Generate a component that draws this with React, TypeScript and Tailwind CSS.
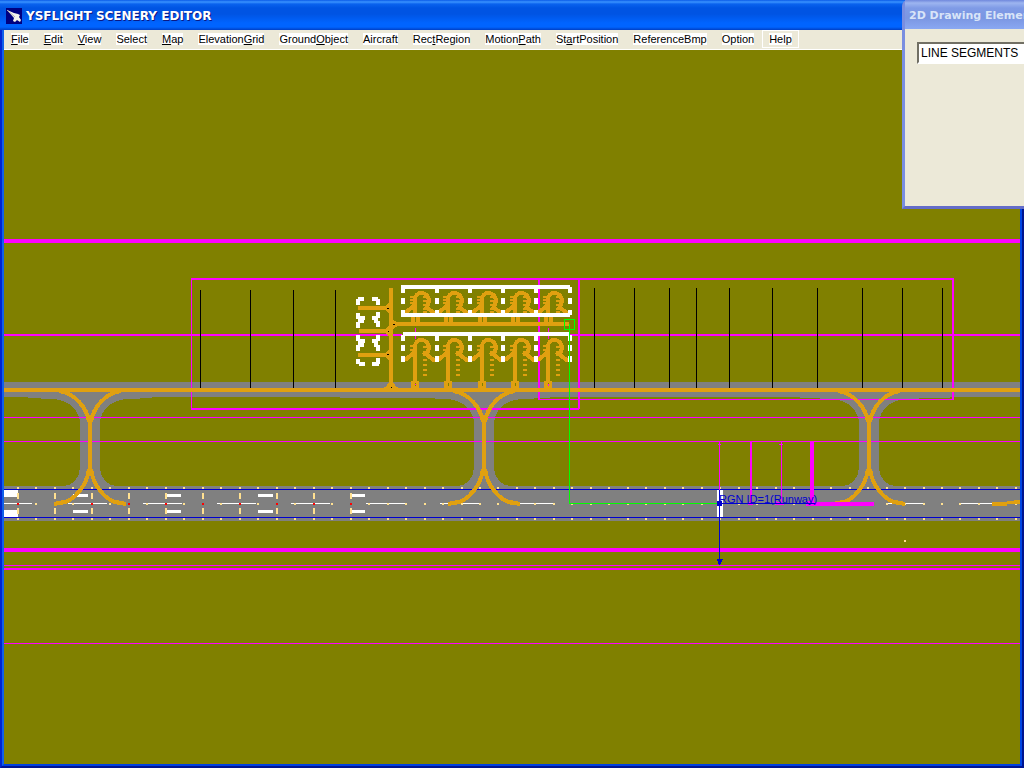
import React from 'react';

const OLIVE = '#808000';
const GRAY = '#808080';
const ORANGE = '#e0a010';
const MAGENTA = '#ff00ff';
const BLUE = '#0000d0';
const LAMP = '#ffe090';

// label split around the underlined access key
const menuItems: [string, string, string][] = [
  ['', 'F', 'ile'],
  ['', 'E', 'dit'],
  ['', 'V', 'iew'],
  ['Select', '', ''],
  ['', 'M', 'ap'],
  ['Elevation', 'G', 'rid'],
  ['Ground', 'O', 'bject'],
  ['Aircraft', '', ''],
  ['Rec', 't', 'Region'],
  ['Motion', 'P', 'ath'],
  ['St', 'a', 'rtPosition'],
  ['ReferenceBmp', '', ''],
  ['Option', '', ''],
  ['Help', '', ''],
];

const TitleBar: React.FC = () => (
  <header className="flex h-[30px] shrink-0 items-center gap-1 bg-[linear-gradient(180deg,#0a5ae8_0,#3a93ff_2px,#0a62ee_4px,#0054e3_8px,#0054e3_14px,#0064ff_23px,#0064ff_27px,#003fc4_30px)] px-1.5 pt-0.5">
    <svg width="16" height="16" viewBox="0 0 16 16" aria-hidden="true">
      <rect width="16" height="16" fill="#000080" />
      <path d="M1 2 L8 5 L12 6 L14 7 L13 9 L15 12 L14 14 L11 12 L9 14 L7 13 L8 10 Z" fill="#f4f4ee" />
      <path d="M1 2 L9 9" stroke="#b0b0b0" strokeWidth="1" />
    </svg>
    <h1 className="font-['DejaVu_Sans',sans-serif] text-[12px] leading-4 font-bold whitespace-nowrap text-white [text-shadow:1px_1px_0_#0a1883]">
      YSFLIGHT SCENERY EDITOR
    </h1>
  </header>
);

const MenuBar: React.FC = () => (
  <nav className="flex h-5 shrink-0 items-start gap-px border-b border-white bg-[#ece9d8] font-['Liberation_Sans',sans-serif] text-[11px] leading-3 text-black">
    {menuItems.map(([before, key, after]) => (
      <button
        key={before + key + after}
        type="button"
        className={`flex h-[18px] shrink-0 items-center ${before === 'Help' ? 'border border-white px-1.5' : 'px-[7px]'}`}
      >
        <span className="bg-white">
          {before}
          <span className="underline">{key}</span>
          {after}
        </span>
      </button>
    ))}
  </nav>
);

const Connector: React.FC<{ x: number }> = ({ x }) => (
  <path
    transform={`translate(${x} 0)`}
    d="M-62 396 L-62 398 L-37 399 C-20 400 -10 411 -10 424 V468 C-10 478 -18 486 -26 486 V488 H26 V486 C18 486 10 478 10 468 V424 C10 411 20 400 37 399 L62 398 V396 Z"
    fill={GRAY}
  />
);

const ConnectorLine: React.FC<{ x: number }> = ({ x }) => (
  <g transform={`translate(${x} 0)`} fill="none" stroke={ORANGE}>
    <path d="M0 415 V476" strokeWidth="4" />
    <path d="M-31 391 C-15 393 -3 408 -1 422 M31 391 C15 393 3 408 1 422" strokeWidth="4" />
    <path d="M-1 469 C-3 486 -17 502 -29 503 M1 469 C3 486 17 502 29 503" strokeWidth="4" />
    <path d="M-36 504 L-26 502 M36 504 L26 502" strokeWidth="4" />
  </g>
);

const Stand: React.FC<{ x: number }> = ({ x }) => (
  <g transform={`translate(${x} 0)`} fill="none" stroke={ORANGE}>
    {/* upper row */}
    <path d="M2 313 V300 C2 295 5 293 8 293 C13 293 16 297 16 301 L14 307" strokeWidth="4" />
    <path d="M2 305 L-8 313 M12 306 L22 314" strokeWidth="4" />
    <path d="M-3 297 H1 M-3 300 H1 M-3 303 H1 M-3 307 H1 M10 297 H14 M10 301 H14 M10 305 H14 M10 309 H14 M10 312 H14" strokeWidth="2" />
    <path d="M0 317 V322 M5 317 V322" strokeWidth="4" />
    {/* lower row */}
    <path d="M2 388 V347 C2 342 5 340 8 340 C13 340 16 344 16 348 L14 354" strokeWidth="4" />
    <path d="M2 352 L-8 360 M10 352 L22 361" strokeWidth="4" />
    <path d="M-3 346 H1 M-3 350 H1 M-2 355 H1 M10 347 H14" strokeWidth="2" />
    <path d="M12 354 V377" strokeWidth="4" strokeDasharray="2 3" />
    <path d="M0 381 V388 M4 381 V388" strokeWidth="4" />
    <path d="M2 383 V386" stroke={OLIVE} strokeWidth="1" />
  </g>
);

const rowDashes = [401, 435, 468, 501, 534, 568];
const stands = [413, 446, 480, 513, 546];
const connectors = [90, 484, 869];
const leftPoles = [200, 250, 293, 335];
const rightPoles = [594, 634, 669, 696, 729, 772, 817, 862, 902, 942];
const lamps = Array.from({ length: 55 }, (_, i) => Math.round(17 + i * 18.48));
const centreDashes = [68, 143, 217, 291, 366, 440, 514, 588, 663, 737, 886, 960];
const touchdownBars = [73, 166, 258, 350];

const SceneryMap: React.FC = () => (
  <svg
    className="block h-full w-full"
    viewBox="4 50 1016 714"
    preserveAspectRatio="xMinYMin slice"
    shapeRendering="crispEdges"
    role="img"
    aria-label="Scenery map"
  >
    <rect x="4" y="50" width="1016" height="714" fill={OLIVE} />

    {/* taxiway and runway pavement */}
    <g fill={GRAY}>
      <rect x="4" y="382" width="1016" height="15" />
      <rect x="340" y="397" width="210" height="1" />
      <rect x="800" y="397" width="150" height="1" />
      <rect x="4" y="486" width="1016" height="35" />
    </g>
    {connectors.map((x) => <Connector key={x} x={x} />)}
    <g fill={MAGENTA}>
      <rect x="4" y="417" width="1016" height="1" />
      <rect x="4" y="441" width="1016" height="1" />
    </g>

    {/* runway markings */}
    <g fill={BLUE}>
      <rect x="4" y="489" width="1016" height="1" />
      <rect x="4" y="517" width="1016" height="1" />
    </g>
    <g fill="#ffffff">
      <rect x="4" y="490" width="14" height="7" />
      <rect x="4" y="510" width="14" height="7" />
      <rect x="4" y="503" width="28" height="1" />
      {touchdownBars.map((x) => (
        <React.Fragment key={x}>
          <rect x={x} y="494" width="15" height="3" />
          <rect x={x} y="510" width="15" height="3" />
        </React.Fragment>
      ))}
      {centreDashes.map((x) => <rect key={x} x={x} y="503" width="39" height="1" />)}
      <rect x="717" y="490" width="6" height="27" />
    </g>
    {lamps.map((x, i) => (
      <g key={x} fill={LAMP}>
        <rect x={x} y="487" width="2" height="2" />
        <rect x={x} y="518" width="2" height="2" />
        <rect x={x} y="503" width="2" height="2" fill={i < 19 && i % 2 === 0 ? '#ff0000' : LAMP} />
        {i < 19 && i % 2 === 0 && (
          <>
            <rect x={x} y="493" width="2" height="6" />
            <rect x={x} y="508" width="2" height="6" />
          </>
        )}
      </g>
    ))}
    <rect x="904" y="540" width="2" height="2" fill={LAMP} />

    {/* wide region outlines */}
    <g fill={MAGENTA}>
      <rect x="4" y="239" width="1016" height="4" />
      <rect x="4" y="548" width="1016" height="4" />
      <rect x="4" y="565" width="1016" height="1" />
      <rect x="4" y="568" width="1016" height="2" />
      <rect x="4" y="643" width="1016" height="1" />
      <rect x="4" y="334" width="398" height="2" />
      <rect x="569" y="334" width="451" height="2" />
      <rect x="191" y="278" width="762" height="2" />
      <rect x="191" y="278" width="1" height="131" />
      <rect x="191" y="408" width="388" height="2" />
      <rect x="578" y="278" width="2" height="131" />
      <rect x="538" y="278" width="2" height="122" />
      <rect x="538" y="399" width="415" height="1" />
      <rect x="952" y="278" width="2" height="122" />
    </g>

    <g fill="#000000">
      {leftPoles.map((x) => <rect key={x} x={x} y="290" width="1" height="98" />)}
      {rightPoles.map((x) => <rect key={x} x={x} y="288" width="1" height="100" />)}
    </g>

    {/* taxi lines */}
    {connectors.map((x) => <ConnectorLine key={x} x={x} />)}
    <g fill={ORANGE}>
      <rect x="4" y="388" width="1016" height="4" />
      <rect x="389" y="288" width="4" height="100" />
      <path d="M383 388 Q388 386 389 381 H393 Q394 386 399 388 Z" />
      <rect x="358" y="306" width="31" height="4" />
      <path d="M385 306 L389 303 V313 L385 310 Z" />
      <rect x="359" y="329" width="30" height="4" />
      <path d="M385 329 L389 326 V336 L385 333 Z" />
      <rect x="358" y="353" width="31" height="4" />
      <path d="M385 353 L389 350 V360 L385 357 Z" />
      <path d="M393 319 Q394 322 400 322 H569 V326 H400 Q394 326 393 330 Z" />
      <path d="M992 502 H1007 V501 H1014 V500 H1020 V504 H1007 V506 H992 Z" />
    </g>
    {stands.map((x) => <Stand key={x} x={x} />)}
    <g fill="#000000">
      <rect x="387" y="308" width="2" height="1" />
      <rect x="393" y="324" width="2" height="1" />
      <rect x="388" y="331" width="1" height="1" />
      <rect x="387" y="354" width="2" height="1" />
      <rect x="391" y="387" width="1" height="1" />
    </g>
    <g fill={MAGENTA}>
      <rect x="415" y="328" width="1" height="11" />
      <rect x="548" y="328" width="1" height="11" />
      <rect x="415" y="384" width="1" height="1" />
      <rect x="548" y="384" width="1" height="2" />
    </g>

    {/* parking stand borders */}
    <g fill="#ffffff">
      <rect x="401" y="285" width="169" height="4" />
      <rect x="401" y="313" width="169" height="4" />
      <rect x="403" y="332" width="166" height="4" />
      {rowDashes.map((x) => (
        <React.Fragment key={x}>
          <rect x={x} y="287" width="4" height="6" />
          <rect x={x} y="298" width="4" height="6" />
          <rect x={x} y="310" width="4" height="5" />
          <rect x={x} y="335" width="4" height="6" />
          <rect x={x} y="345" width="4" height="6" />
          <rect x={x} y="356" width="4" height="6" />
        </React.Fragment>
      ))}
      <path d="M356 299 H358 V297 H364 V301 H360 V305 H356 Z M380 299 H378 V297 H372 V301 H376 V305 H380 Z" />
      <path d="M356 313 H360 V316 H365 V320 H364 V323 H360 V328 H356 V322 H358 V319 H356 Z M380 312 H376 V316 H372 V320 H374 V323 H376 V327 H380 V321 H378 V318 H380 Z" />
      <path d="M356 335 H360 V339 H365 V343 H364 V347 H360 V351 H356 V345 H358 V341 H356 Z M380 335 H376 V339 H372 V343 H374 V347 H376 V351 H380 V345 H378 V341 H380 Z" />
      <path d="M356 359 H360 V362 H365 V366 H359 V364 H356 Z M380 358 H376 V362 H372 V366 H379 V364 H380 Z" />
    </g>

    {/* selected marker and its guide */}
    <path d="M564.5 319.5 H574.5 V329.5 H564.5 Z M569.5 324 V503.5 H719" fill="none" stroke="#00ff00" />

    {/* motion path handles */}
    <g fill={MAGENTA}>
      <rect x="719" y="441" width="1" height="62" />
      <rect x="718" y="444" width="3" height="1" />
      <rect x="750" y="441" width="2" height="64" />
      <rect x="748" y="502" width="5" height="3" />
      <rect x="781" y="441" width="1" height="64" />
      <rect x="779" y="444" width="4" height="1" />
      <path d="M775 501 L782 503 H784 V505 H775 Z" />
      <rect x="810" y="441" width="4" height="64" />
      <path d="M806 501 L814 502 H874 V506 H806 Z" />
    </g>

    {/* runway region */}
    <g fill={BLUE}>
      <rect x="719" y="503" width="96" height="1" />
      <rect x="719" y="490" width="1" height="75" />
      <rect x="717" y="501" width="5" height="5" />
      <path d="M717 559 H723 L720 565 H719 Z" />
      <text x="719" y="503" fontSize="11" fontFamily="'Liberation Sans', sans-serif">
        RGN ID=1(Runway)
      </text>
    </g>
  </svg>
);

const DrawingElementWindow: React.FC = () => (
  <aside className="absolute top-0 right-0 h-[209px] w-[122px] overflow-hidden">
    <div className="flex h-full w-[240px] flex-col rounded-tl-md border-3 border-t-0 border-[#7a8ee0] border-b-[#646cc8] bg-[#ece9d8]">
      <h2 className="flex h-[29px] shrink-0 items-center bg-[linear-gradient(180deg,#7088dc_0,#9db5f0_3px,#7f9be6_8px,#7b96e2_18px,#8aa8f2_29px)] pt-1 pl-1 font-['DejaVu_Sans',sans-serif] text-[11px] font-bold whitespace-nowrap text-[#d8e4f8]">
        2D Drawing Element
      </h2>
      <select
        aria-label="Element type"
        className="mt-[13px] ml-3 h-[22px] w-[200px] appearance-none border-2 border-t-[#716f64] border-r-white border-b-white border-l-[#716f64] bg-white px-0.5 font-['Liberation_Sans',sans-serif] text-[12px] leading-4 text-black"
      >
        <option>LINE SEGMENTS</option>
      </select>
    </div>
  </aside>
);

const App: React.FC = () => {
  return (
    <div className="relative flex h-screen flex-col overflow-hidden">
      <TitleBar />
      <div className="flex min-h-0 flex-1 border-2 border-t-0 border-r-[#001490] border-b-[#001490] border-l-[#0024d0]">
        <div className="flex min-h-0 min-w-0 flex-1 flex-col border-2 border-t-0 border-r-[#0046e4] border-b-[#0040e0] border-l-[#1060ea]">
          <MenuBar />
          <main className="min-h-0 flex-1 overflow-hidden">
            <SceneryMap />
          </main>
        </div>
      </div>
      <DrawingElementWindow />
    </div>
  );
};

export default App;
